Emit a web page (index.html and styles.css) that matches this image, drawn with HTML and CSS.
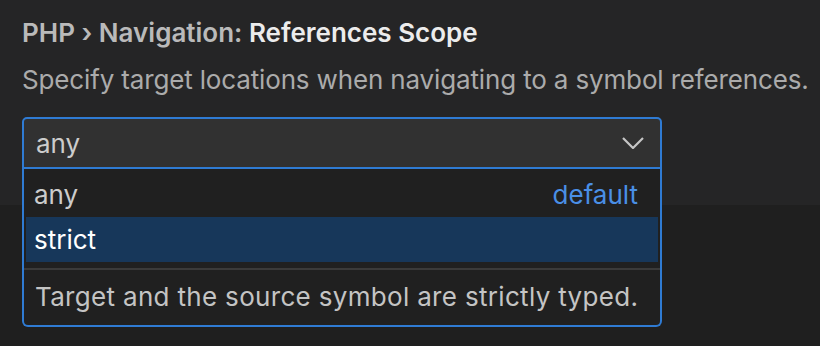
FILE: index.html
```html
<!DOCTYPE html>
<html lang="en">
<head>
    <meta charset="UTF-8">
    <title>Settings - References Scope</title>
    <link rel="stylesheet" href="styles.css">
</head>
<body>
    <div class="setting">
        <div class="setting-title">
            <span class="category">PHP › Navigation: </span><span class="label">References Scope</span>
        </div>
        <div class="setting-desc">Specify target locations when navigating to a symbol references.</div>

        <div class="select-wrap">
            <div class="select">
                <span>any</span>
                <svg class="chevron" width="22" height="12" viewBox="0 0 22 12">
                    <polyline points="1,1 11,11 21,1" fill="none" stroke="#c5c5c5" stroke-width="2.2"/>
                </svg>
            </div>

            <div class="dropdown">
                <div class="options">
                    <div class="option">
                        <span>any</span>
                        <span class="default">default</span>
                    </div>
                    <div class="option selected">
                        <span>strict</span>
                    </div>
                </div>
                <div class="separator"></div>
                <div class="option-desc">Target and the source symbol are strictly typed.</div>
            </div>
        </div>
    </div>
</body>
</html>
```

FILE: styles.css
```css
* {
    margin: 0;
    padding: 0;
    box-sizing: border-box;
}

body {
    font-family: Inter, 'Noto Sans', sans-serif;
    font-size: 26px;
    background: #1f1f1f;
    color: #cccccc;
    height: 346px;
    overflow: hidden;
}

.setting {
    background: #252526;
    height: 205px;
    padding: 15px 22px 0;
}

.setting-title {
    line-height: 36px;
    font-weight: 600;
    white-space: nowrap;
}

.category {
    color: #bababa;
}

.label {
    color: #ececec;
}

.setting-desc {
    margin-top: 11px;
    line-height: 36px;
    color: #ababab;
    white-space: nowrap;
    letter-spacing: -0.15px;
}

.select-wrap {
    position: relative;
    width: 640px;
    margin-top: 19px;
}

.select {
    height: 52px;
    display: flex;
    align-items: center;
    justify-content: space-between;
    padding: 0 16px 0 12px;
    background: #313131;
    border: 2px solid #2f7bd3;
    border-radius: 5px 5px 0 0;
    color: #cccccc;
}

.chevron {
    display: block;
}

/* dropdown list lies over the rows below */
.dropdown {
    position: absolute;
    top: 100%;
    left: 0;
    right: 0;
    background: #202020;
    border: 2px solid #2f7bd3;
    border-top: none;
    border-radius: 0 0 6px 6px;
}

.options {
    padding: 3px 2px 0;
}

.option {
    height: 45px;
    display: flex;
    align-items: center;
    justify-content: space-between;
    padding: 0 20px 0 8px;
    color: #cccccc;
}

.option.selected {
    background: #17375a;
    color: #ffffff;
}

.default {
    color: #4a8fe6;
}

.separator {
    height: 2px;
    margin-top: 6px;
    background: #3a3a3a;
}

.option-desc {
    padding: 9px 11px 10px;
    line-height: 36px;
    color: #c4c4c4;
    white-space: nowrap;
    letter-spacing: 0.32px;
}
```
